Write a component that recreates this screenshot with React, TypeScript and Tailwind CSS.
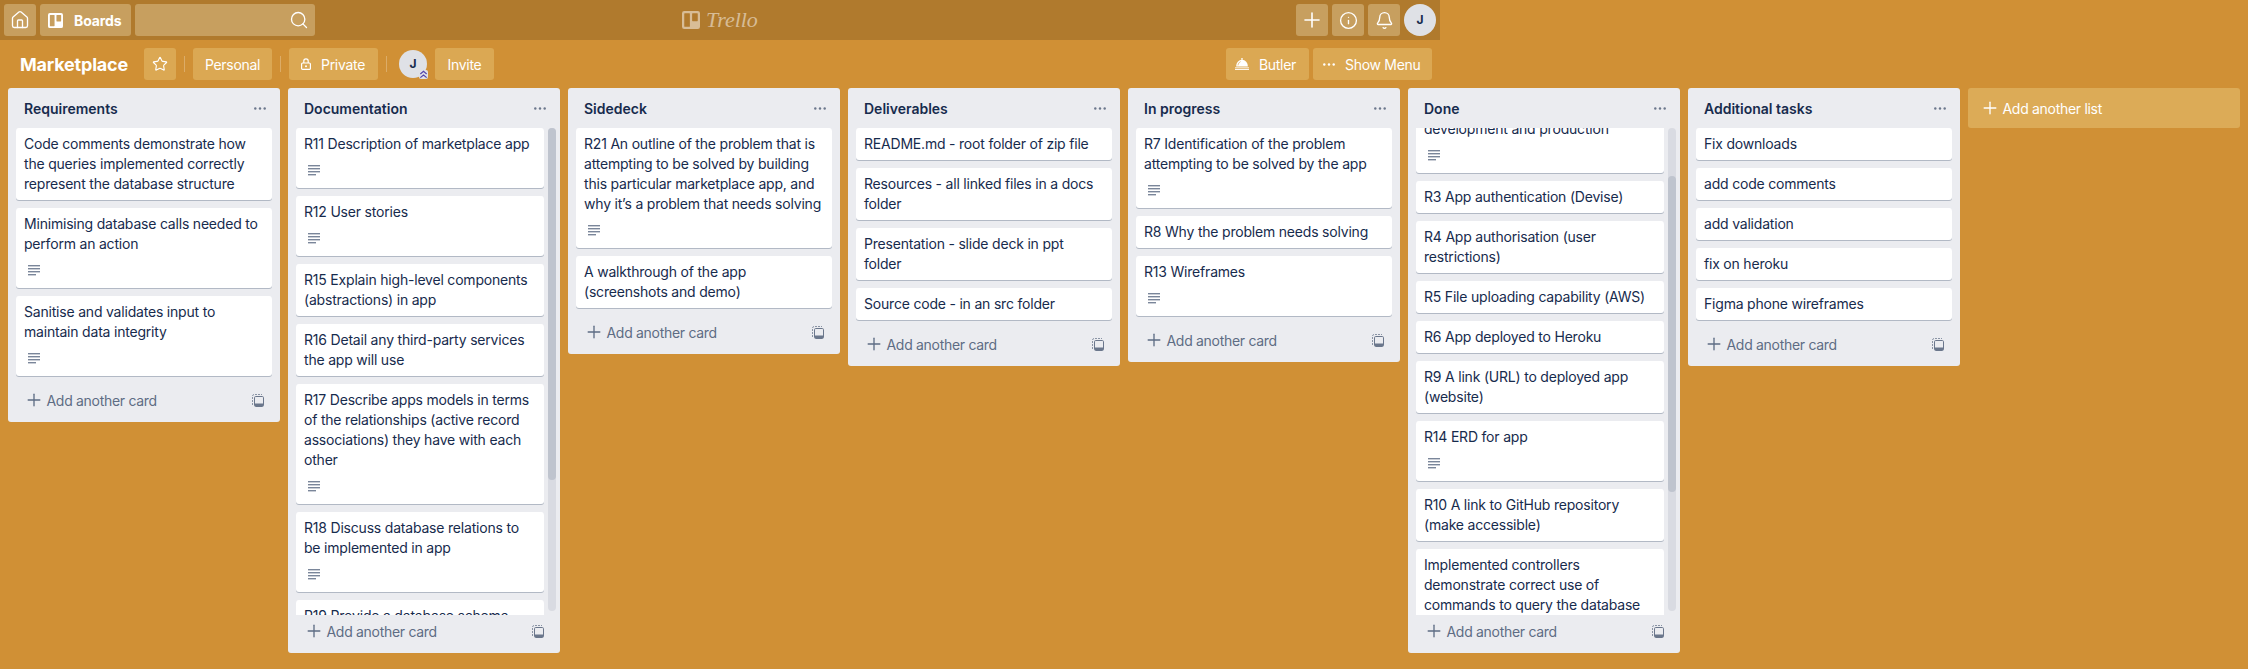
import { Home, Search, Plus, Info, Bell, Star } from "lucide-react";

type CardData = { text: string; desc?: boolean };

type ListData = {
  title: string;
  cards: CardData[];
  // scrolled lists have a fixed bar; values are px inside the 483px track
  scroll?: { offset: number; thumbTop: number; thumbHeight: number };
};

const LISTS: ListData[] = [
  {
    title: "Requirements",
    cards: [
      { text: "Code comments demonstrate how the queries implemented correctly represent the database structure" },
      { text: "Minimising database calls needed to perform an action", desc: true },
      { text: "Sanitise and validates input to maintain data integrity", desc: true },
    ],
  },
  {
    title: "Documentation",
    scroll: { offset: 0, thumbTop: 0, thumbHeight: 352 },
    cards: [
      { text: "R11 Description of marketplace app", desc: true },
      { text: "R12 User stories", desc: true },
      { text: "R15 Explain high-level components (abstractions) in app" },
      { text: "R16 Detail any third-party services the app will use" },
      { text: "R17 Describe apps models in terms of the relationships (active record associations) they have with each other", desc: true },
      { text: "R18 Discuss database relations to be implemented in app", desc: true },
      { text: "R19 Provide a database schema design" },
    ],
  },
  {
    title: "Sidedeck",
    cards: [
      { text: "R21 An outline of the problem that is attempting to be solved by building this particular marketplace app, and why it\u2019s a problem that needs solving", desc: true },
      { text: "A walkthrough of the app (screenshots and demo)" },
    ],
  },
  {
    title: "Deliverables",
    cards: [
      { text: "README.md - root folder of zip file" },
      { text: "Resources - all linked files in a docs folder" },
      { text: "Presentation - slide deck in ppt folder" },
      { text: "Source code - in an src folder" },
    ],
  },
  {
    title: "In progress",
    cards: [
      { text: "R7 Identification of the problem attempting to be solved by the app", desc: true },
      { text: "R8 Why the problem needs solving" },
      { text: "R13 Wireframes", desc: true },
    ],
  },
  {
    title: "Done",
    scroll: { offset: 15, thumbTop: 48, thumbHeight: 316 },
    cards: [
      { text: "development and production", desc: true },
      { text: "R3 App authentication (Devise)" },
      { text: "R4 App authorisation (user restrictions)" },
      { text: "R5 File uploading capability (AWS)" },
      { text: "R6 App deployed to Heroku" },
      { text: "R9 A link (URL) to deployed app (website)" },
      { text: "R14 ERD for app", desc: true },
      { text: "R10 A link to GitHub repository (make accessible)" },
      { text: "Implemented controllers demonstrate correct use of commands to query the database" },
    ],
  },
  {
    title: "Additional tasks",
    cards: [
      { text: "Fix downloads" },
      { text: "add code comments" },
      { text: "add validation" },
      { text: "fix on heroku" },
      { text: "Figma phone wireframes" },
    ],
  },
];

function BoardsIcon({ className }: { className?: string }) {
  return (
    <svg viewBox="0 0 16 16" className={className} fill="currentColor">
      <path
        fillRule="evenodd"
        d="M2 0h12a2 2 0 0 1 2 2v12a2 2 0 0 1-2 2H2a2 2 0 0 1-2-2V2a2 2 0 0 1 2-2zm.5 2a.5.5 0 0 0-.5.5v11a.5.5 0 0 0 .5.5h4a.5.5 0 0 0 .5-.5v-11a.5.5 0 0 0-.5-.5h-4zm7 0a.5.5 0 0 0-.5.5v6a.5.5 0 0 0 .5.5h4a.5.5 0 0 0 .5-.5v-6a.5.5 0 0 0-.5-.5h-4z"
      />
    </svg>
  );
}

function LockIcon() {
  return (
    <svg viewBox="0 0 10 12" className="h-3 w-[10px] shrink-0" fill="none">
      <path d="M2.8 5V3a2.2 2.2 0 0 1 4.4 0v2" stroke="white" strokeWidth="1.2" />
      <rect x="0.6" y="5" width="8.8" height="6.4" rx="1" stroke="white" strokeWidth="1.2" />
      <circle cx="5" cy="8.2" r="1" fill="white" />
    </svg>
  );
}

function ButlerIcon() {
  return (
    <svg viewBox="0 0 14 12" className="h-3 w-[14px] shrink-0" fill="white">
      <circle cx="7" cy="0.9" r="0.9" />
      <path d="M1.2 8.4C1.2 4.8 3.6 1.8 7 1.8s5.8 3 5.8 6.6H1.2z" />
      <path d="M3 7.4C3.2 5.6 4.2 4.2 5.6 3.6" stroke="#dba853" strokeWidth="0.7" fill="none" />
      <rect x="0" y="9.4" width="14" height="0.9" />
      <rect x="0" y="11" width="14" height="0.9" />
    </svg>
  );
}

function Dots({ className }: { className?: string }) {
  return (
    <svg viewBox="0 0 12 3" className={className} fill="currentColor">
      <circle cx="1.3" cy="1.5" r="1.2" />
      <circle cx="6" cy="1.5" r="1.2" />
      <circle cx="10.7" cy="1.5" r="1.2" />
    </svg>
  );
}

function DescIcon() {
  return (
    <svg viewBox="0 0 12 11" className="h-[11px] w-3" fill="#7a869a">
      <rect x="0" y="0" width="12" height="1.4" />
      <rect x="0" y="3" width="12" height="1.4" />
      <rect x="0" y="6" width="12" height="1.4" />
      <rect x="0" y="9" width="8" height="1.4" />
    </svg>
  );
}

function TemplateIcon() {
  return (
    <svg viewBox="0 0 12 13" className="h-[13px] w-3" fill="none">
      <path d="M0.5 11V2.2a1.7 1.7 0 0 1 1.7-1.7H10" stroke="#8993a4" strokeDasharray="2 1" />
      <rect x="2.5" y="2.5" width="9" height="10" rx="1.2" stroke="#6b778c" />
      <rect x="3" y="9.5" width="8" height="2.5" fill="#6b778c" />
    </svg>
  );
}

function Card({ card, offset }: { card: CardData; offset?: number }) {
  return (
    <div
      className="mb-2 rounded-[3px] bg-white px-2 py-1.5 text-[14px] leading-5 tracking-[-0.2px] text-[#172b4d] shadow-[0_1px_0_rgba(9,30,66,0.25)]"
      style={offset ? { marginTop: -offset } : undefined}
    >
      <div>{card.text}</div>
      {card.desc && (
        <div className="flex h-7 items-center pt-1 pl-1">
          <DescIcon />
        </div>
      )}
    </div>
  );
}

function List({ list }: { list: ListData }) {
  const { scroll } = list;
  return (
    <div className="flex max-h-[565px] w-[272px] shrink-0 flex-col rounded-[3px] bg-[#ebecf0]">
      <div className="flex h-10 shrink-0 items-center justify-between pr-[14px] pl-4">
        <h2 className="text-[14px] font-semibold text-[#172b4d]">{list.title}</h2>
        <Dots className="w-3 text-[#6b778c]" />
      </div>
      <div className="flex min-h-0 flex-1">
        <div className={scroll ? "w-[256px] shrink-0 overflow-hidden pl-2" : "w-full px-2"}>
          {list.cards.map((c, i) => (
            <Card key={c.text} card={c} offset={i === 0 ? scroll?.offset : undefined} />
          ))}
        </div>
        {scroll && (
          <div className="mb-1 ml-1 w-2 shrink-0 rounded bg-[#d9dbe2]">
            <div
              className="w-2 rounded bg-[#bfc4ce]"
              style={{ marginTop: scroll.thumbTop, height: scroll.thumbHeight }}
            />
          </div>
        )}
      </div>
      <div className="flex h-[38px] shrink-0 items-start pr-4 pl-4">
        <div className="flex h-8 w-full items-center text-[14px] tracking-[-0.3px] text-[#5e6c84]">
          <Plus className="mr-[2.5px] h-5 w-5 shrink-0" strokeWidth={1.6} />
          <span>Add another card</span>
          <span className="ml-auto">
            <TemplateIcon />
          </span>
        </div>
      </div>
    </div>
  );
}

const navBtn = "flex h-8 items-center justify-center rounded-[3px] bg-[#c79f5f] text-white";
const barBtn = "flex h-8 shrink-0 items-center rounded-[3px] bg-[#dba853] text-[14px] tracking-[-0.3px] text-white";

export default function App() {
  return (
    <div className="h-[669px] w-[2248px] overflow-hidden bg-[#d09035] font-['Inter','Liberation_Sans',sans-serif]">
      <header className="grid h-10 w-[1440px] grid-cols-[1fr_auto_1fr] items-center bg-[#b07a2d] px-1">
        <div className="flex gap-1">
          <div className={`${navBtn} w-8`}>
            <Home className="h-5 w-5" strokeWidth={1.6} />
          </div>
          <div className={`${navBtn} w-[91px] justify-start pl-2`}>
            <BoardsIcon className="h-[15px] w-[15px]" />
            <span className="ml-[11px] text-[14px] font-bold tracking-[-0.1px]">Boards</span>
          </div>
          <div className={`${navBtn} w-[180px] justify-end pr-1.5`}>
            <Search className="h-5 w-5" strokeWidth={1.6} />
          </div>
        </div>
        <div className="flex items-center gap-[6px] text-white/50">
          <BoardsIcon className="h-[18px] w-[18px]" />
          <span className="font-['Liberation_Serif',serif] text-[22px] leading-none italic">Trello</span>
        </div>
        <div className="flex justify-end gap-1">
          <div className={`${navBtn} w-8`}>
            <Plus className="h-6 w-6" strokeWidth={1.6} />
          </div>
          <div className={`${navBtn} w-8`}>
            <Info className="h-[19px] w-[19px]" strokeWidth={1.7} />
          </div>
          <div className={`${navBtn} w-8`}>
            <Bell className="h-[19px] w-[19px]" strokeWidth={1.7} />
          </div>
          <div className="flex h-8 w-8 items-center justify-center rounded-full bg-[#dfe1e6] text-[12px] font-bold text-[#172b4d]">
            J
          </div>
        </div>
      </header>

      <div className="flex h-12 w-[1440px] items-center pr-2 pl-5">
        <h1 className="w-[124px] shrink-0 text-[18px] font-bold tracking-[-0.2px] text-white">Marketplace</h1>
        <div className={`${barBtn} w-8 justify-center`}>
          <Star className="h-4 w-4" strokeWidth={1.7} />
        </div>
        <div className="mx-2 h-4 w-px bg-white/25" />
        <div className={`${barBtn} w-[79px] justify-center`}>Personal</div>
        <div className="mx-2 h-4 w-px bg-white/25" />
        <div className={`${barBtn} w-[89px] pl-3`}>
          <LockIcon />
          <span className="ml-[10px]">Private</span>
        </div>
        <div className="mx-2 h-4 w-px bg-white/25" />
        <div className="relative ml-[4px] flex h-7 w-7 items-center justify-center rounded-full bg-[#dfe1e6] text-[12px] font-bold text-[#172b4d]">
          J
          <svg viewBox="0 0 10 10" className="absolute -right-px -bottom-px h-[9px] w-[9px] rounded-[2px] bg-[#dfe1e6]" fill="none" stroke="#5243aa" strokeWidth="1.3">
            <path d="M1.5 4.5 5 1.5l3.5 3M1.5 8.5 5 5.5l3.5 3" />
          </svg>
        </div>
        <div className={`${barBtn} ml-2 w-[59px] justify-center`}>Invite</div>
        <div className={`${barBtn} ml-auto w-[83px] pl-[9px]`}>
          <ButlerIcon />
          <span className="ml-[10px]">Butler</span>
        </div>
        <div className={`${barBtn} ml-1 w-[119px] pl-[10px]`}>
          <Dots className="w-3 text-white" />
          <span className="ml-[10px]">Show Menu</span>
        </div>
      </div>

      <main className="flex items-start gap-2 px-2">
        {LISTS.map((list) => (
          <List key={list.title} list={list} />
        ))}
        <div className="flex h-10 w-[272px] shrink-0 items-center rounded-[3px] bg-[#dcab57] pl-3 text-[14px] tracking-[-0.3px] text-white">
          <Plus className="mr-[2.5px] h-5 w-5 shrink-0" strokeWidth={1.6} />
          Add another list
        </div>
      </main>
    </div>
  );
}
